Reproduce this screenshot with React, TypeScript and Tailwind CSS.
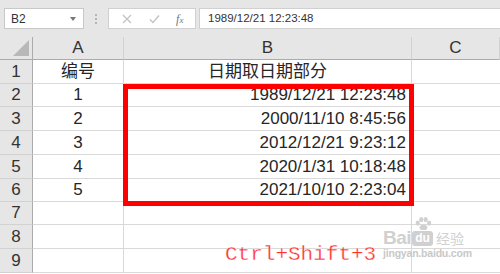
import { Fragment } from "react";

const rows: { n: number; a: string; b: string; h: number; right?: boolean }[] = [
  { n: 1, a: "编号", b: "日期取日期部分", h: 24 },
  { n: 2, a: "1", b: "1989/12/21 12:23:48", h: 23, right: true },
  { n: 3, a: "2", b: "2000/11/10 8:45:56", h: 24, right: true },
  { n: 4, a: "3", b: "2012/12/21 9:23:12", h: 24, right: true },
  { n: 5, a: "4", b: "2020/1/31 10:18:48", h: 24, right: true },
  { n: 6, a: "5", b: "2021/10/10 2:23:04", h: 23, right: true },
  { n: 7, a: "", b: "", h: 23 },
  { n: 8, a: "", b: "", h: 24 },
  { n: 9, a: "", b: "", h: 24 },
];

const font = "font-['Liberation_Sans','Noto_Sans_CJK_SC',sans-serif]";

const Toolbar = () => (
  <div className="h-[37px] bg-[#e6e6e6] flex items-start pt-[8px] pl-[4px]">
    {/* name box */}
    <div className="w-[80px] h-[21px] bg-white border border-[#c8c8c8] flex items-center justify-between px-[6px]">
      <span className="text-[12px] text-[#333]">B2</span>
      <span className="w-0 h-0 border-l-[3px] border-r-[3px] border-t-[4px] border-l-transparent border-r-transparent border-t-[#777] mr-[1px]" />
    </div>
    {/* dots */}
    <div className="w-[24px] h-[21px] flex flex-col items-center justify-center gap-[2px]">
      <span className="w-[2px] h-[2px] bg-[#b5b5b5]" />
      <span className="w-[2px] h-[2px] bg-[#b5b5b5]" />
      <span className="w-[2px] h-[2px] bg-[#b5b5b5]" />
    </div>
    {/* formula buttons */}
    <div className="w-[88px] h-[21px] bg-white border border-[#d0d0d0] flex items-center justify-around px-[4px]">
      <svg width="12" height="12" viewBox="0 0 12 12">
        <path d="M2 2 L10 10 M10 2 L2 10" stroke="#c4c4c4" strokeWidth="1.3" />
      </svg>
      <svg width="13" height="12" viewBox="0 0 13 12">
        <path d="M2 6.5 L5 9.5 L11 2.5" stroke="#c4c4c4" strokeWidth="1.4" fill="none" />
      </svg>
      <span className="text-[12px] italic text-[#777] font-['Liberation_Serif',serif]">
        f<span className="text-[9px]">x</span>
      </span>
    </div>
    {/* formula input */}
    <div className="flex-1 h-[21px] ml-[3px] bg-white border border-[#d0d0d0] border-r-0 flex items-center pl-[8px]">
      <span className="text-[11.5px] text-[#333]">1989/12/21 12:23:48</span>
    </div>
  </div>
);

export default function App() {
  return (
    <div className={`w-[500px] h-[274px] overflow-hidden bg-white relative ${font}`}>
      <Toolbar />
      <div className="grid grid-cols-[33px_91px_288px_88px] text-[17px] text-[#262626]">
        {/* column header */}
        <div className="h-[23px] bg-[#e6e6e6] border-r border-b border-[#ababab] relative">
          <svg className="absolute right-[3px] bottom-[3px]" width="16" height="16" viewBox="0 0 16 16">
            <path d="M16 0 L16 16 L0 16 Z" fill="#b8b8b8" />
          </svg>
        </div>
        {["A", "B", "C"].map((c) => (
          <div
            key={c}
            className="h-[23px] bg-[#e6e6e6] border-r border-b border-[#d2d2d2] border-b-[#ababab] flex items-center justify-center text-[#333]"
          >
            {c}
          </div>
        ))}
        {rows.map((r) => (
          <Fragment key={r.n}>
            <div
              style={{ height: r.h }}
              className="bg-[#e6e6e6] border-r border-b border-r-[#ababab] border-b-[#d2d2d2] flex items-center justify-center text-[#333]"
            >
              {r.n}
            </div>
            <div style={{ height: r.h }} className="border-r border-b border-[#d9d9d9] flex items-center justify-center">
              {r.a}
            </div>
            <div
              style={{ height: r.h }}
              className={`border-r border-b border-[#d9d9d9] flex items-center ${r.right ? "justify-end pr-[5px]" : "justify-center"}`}
            >
              {r.b}
            </div>
            <div style={{ height: r.h }} className="border-b border-[#d9d9d9]" />
          </Fragment>
        ))}
      </div>

      {/* highlight box */}
      <div className="absolute left-[123px] top-[84px] w-[291px] h-[122px] border-[5px] border-[#ff0000]" />

      {/* shortcut note */}
      <div className="absolute left-[225px] top-[242px] text-[21px] leading-[26px] text-[#ff3030] font-['Liberation_Mono',monospace] [-webkit-text-stroke:0.3px_white]">
        Ctrl+Shift+3
      </div>

      {/* watermark */}
      <div className="absolute left-[383px] top-[216px] flex flex-col items-start text-[#d0d0d0]">
        <div className="flex items-end">
          <span className="text-[19px] font-bold leading-[17px] tracking-[-0.5px]">Bai</span>
          <div className="flex flex-col items-center ml-[1px]">
            {/* paw */}
            <svg width="20" height="14" viewBox="0 0 22 16" className="mb-[1px]">
              <ellipse cx="5" cy="8" rx="2.4" ry="3" fill="#d0d0d0" />
              <ellipse cx="9" cy="4" rx="2.4" ry="3" fill="#d0d0d0" />
              <ellipse cx="14" cy="4" rx="2.4" ry="3" fill="#d0d0d0" />
              <ellipse cx="18" cy="8" rx="2.4" ry="3" fill="#d0d0d0" />
              <ellipse cx="11.5" cy="13" rx="4.5" ry="3" fill="#d0d0d0" />
            </svg>
            <span className="w-[21px] h-[15px] rounded-[3px] bg-[#d0d0d0] text-white text-[12px] font-bold leading-[15px] text-center">
              du
            </span>
          </div>
          <span className="text-[14px] leading-[16px] ml-[3px] font-['Noto_Sans_CJK_SC',sans-serif]">经验</span>
        </div>
        <span className="text-[10.5px] leading-[15px] font-bold tracking-[-0.2px] text-[#c8c8c8]">jingyan.baidu.com</span>
      </div>
    </div>
  );
}
